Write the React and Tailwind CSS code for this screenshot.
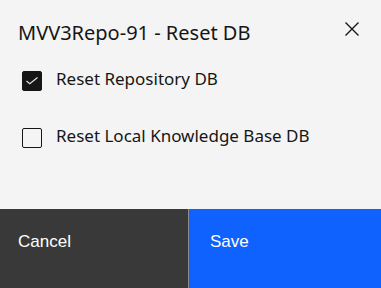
import React, { useState } from 'react';

const CheckRow = ({ checked, onToggle, label }) => (
  <label className="flex items-center gap-[14px] cursor-pointer" onClick={onToggle}>
    <span
      className={`relative w-[20px] h-[20px] rounded-[2px] border border-[#161616] ${
        checked ? 'bg-[#161616]' : 'bg-transparent'
      }`}
    >
      {checked && (
        <svg className="absolute -left-px -top-px" width="20" height="20" viewBox="0 0 20 20" fill="none">
          <path d="M4.5 10 L7.8 12.8 L15.5 6.5" stroke="#e0e0e0" strokeWidth="1.2" />
        </svg>
      )}
    </span>
    <span className="text-[17px] leading-[24px] text-[#161616] -mt-[3px]">{label}</span>
  </label>
);

const App = () => {
  const [repo, setRepo] = useState(true);
  const [local, setLocal] = useState(false);

  return (
    <div className="w-[381px] h-[288px] flex flex-col bg-[#f4f4f4] font-['Noto_Sans',sans-serif]">
      <div className="flex items-start justify-between pl-[18px] pr-[22px] pt-[19px]">
        <h2 className="text-[20px] leading-[28px] text-[#161616]">MVV3Repo-91 - Reset DB</h2>
        <button className="mt-[3px] text-[#161616]" title="Close">
          <svg width="14" height="14" viewBox="0 0 14 14" fill="none">
            <path d="M0.5 0.5 L13.5 13.5 M13.5 0.5 L0.5 13.5" stroke="#161616" strokeWidth="1.4" />
          </svg>
        </button>
      </div>

      <div className="flex flex-col gap-[36px] pl-[22px] pt-[23px]">
        <CheckRow checked={repo} onToggle={() => setRepo(!repo)} label="Reset Repository DB" />
        <CheckRow checked={local} onToggle={() => setLocal(!local)} label="Reset Local Knowledge Base DB" />
      </div>

      <div className="mt-auto h-[79px] flex font-['Liberation_Sans',sans-serif] text-[17px] text-white">
        <button className="w-[189px] bg-[#393939] text-left pl-[18px] pb-[14px] border-r border-[#8d8d8d]">
          Cancel
        </button>
        <button className="flex-1 bg-[#0f62fe] text-left pl-[21px] pb-[14px]">Save</button>
      </div>
    </div>
  );
};

export default App;
